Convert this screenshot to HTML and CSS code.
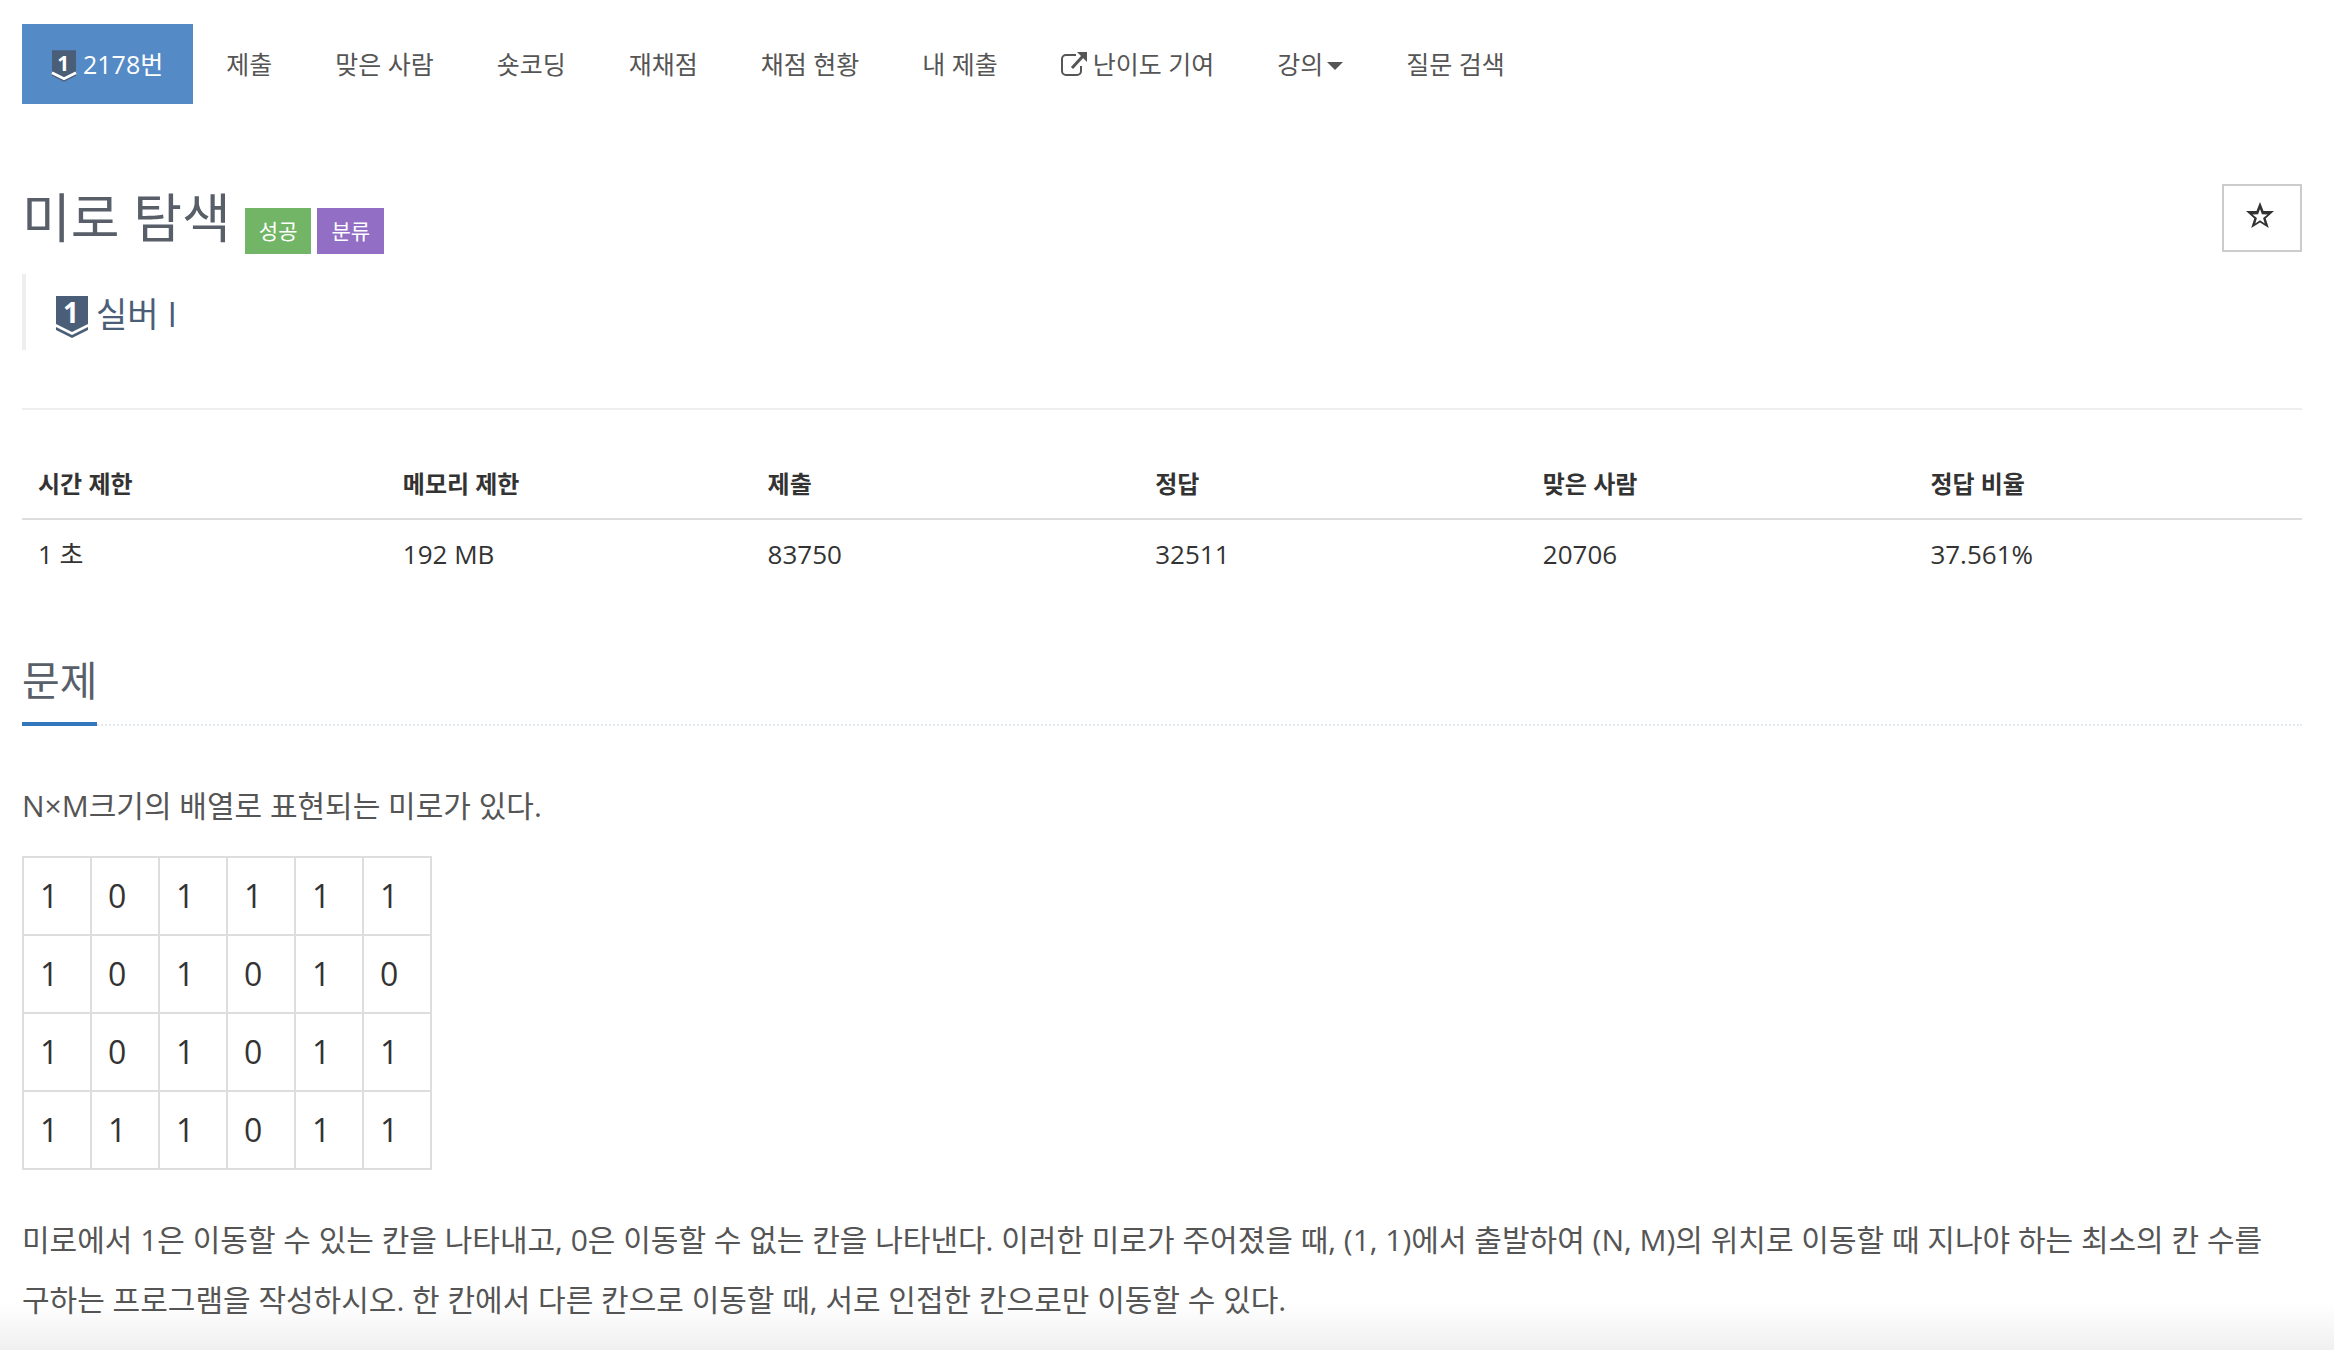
FILE: index.html
```
<!DOCTYPE html>
<html lang="ko">
<head>
    <meta charset="UTF-8">
    <meta name="viewport" content="width=device-width, initial-scale=1.0">
    <title>2178번: 미로 탐색</title>
    <link rel="stylesheet" href="styles.css">
</head>
<body>
    <div class="container">
        <nav>
            <ul class="problem-menu">
                <li class="active">
                    <a href="#">
                        <svg class="tier-small" viewBox="0 0 32 42" aria-hidden="true">
                            <path fill="#4a5e78" d="M0 0h32v34L16 42 0 34z"/>
                            <path fill="none" stroke="#fff" stroke-width="3.5" d="M0 30l16 8 16-8"/>
                            <text x="15" y="27" class="tier-number">1</text>
                        </svg>
                        <span>2178번</span>
                    </a>
                </li>
                <li><a href="#">제출</a></li>
                <li><a href="#">맞은 사람</a></li>
                <li><a href="#">숏코딩</a></li>
                <li><a href="#">재채점</a></li>
                <li><a href="#">채점 현황</a></li>
                <li><a href="#">내 제출</a></li>
                <li>
                    <a href="#">
                        <svg class="external" viewBox="0 0 26 24" aria-hidden="true">
                            <path fill="none" stroke="currentColor" stroke-width="2" d="M15 3H5a4 4 0 0 0-4 4v12a4 4 0 0 0 4 4h11a4 4 0 0 0 4-4v-5"/>
                            <path fill="none" stroke="currentColor" stroke-width="3" d="M11 16L22 4"/>
                            <path fill="currentColor" d="M16 0h10v10z"/>
                        </svg>
                        <span>난이도 기여</span>
                    </a>
                </li>
                <li><a href="#">강의<span class="caret"></span></a></li>
                <li><a href="#">질문 검색</a></li>
            </ul>
        </nav>

        <header class="page-header">
            <h1>미로 탐색</h1>
            <span class="label label-success">성공</span>
            <span class="label label-purple">분류</span>
            <button type="button" class="btn-star" aria-label="즐겨찾기">
                <svg viewBox="0 0 28 26" aria-hidden="true">
                    <path fill="currentColor" fill-rule="evenodd" d="M14 0l3.5 9H28l-8.300 7.500L22.800 26 14 20.500 5.200 26l3.100-9.500L0 9h10.500zM14 7l-1.900 5.300-5.700.2 4.500 3.500-1.600 5.500 4.700-3.200 4.700 3.200-1.600-5.500 4.500-3.500-5.700-.2z"/>
                </svg>
            </button>
        </header>

        <blockquote class="tier">
            <svg viewBox="0 0 32 42" aria-hidden="true">
                <path fill="currentColor" d="M0 0h32v28l-16 8-16-8z"/>
                <path fill="currentColor" d="M0 31l16 8 16-8v3l-16 8-16-8z"/>
                <text x="15" y="27" class="tier-number">1</text>
            </svg>
            <span>실버 I</span>
        </blockquote>

        <hr>

        <table class="problem-info">
            <thead>
                <tr>
                    <th>시간 제한</th>
                    <th>메모리 제한</th>
                    <th>제출</th>
                    <th>정답</th>
                    <th>맞은 사람</th>
                    <th>정답 비율</th>
                </tr>
            </thead>
            <tbody>
                <tr>
                    <td>1 초</td>
                    <td>192 MB</td>
                    <td>83750</td>
                    <td>32511</td>
                    <td>20706</td>
                    <td>37.561%</td>
                </tr>
            </tbody>
        </table>

        <section>
            <div class="headline">
                <h2>문제</h2>
            </div>
            <div class="problem-text">
                <p>N×M크기의 배열로 표현되는 미로가 있다.</p>
                <table class="maze">
                    <tbody>
                        <tr><td>1</td><td>0</td><td>1</td><td>1</td><td>1</td><td>1</td></tr>
                        <tr><td>1</td><td>0</td><td>1</td><td>0</td><td>1</td><td>0</td></tr>
                        <tr><td>1</td><td>0</td><td>1</td><td>0</td><td>1</td><td>1</td></tr>
                        <tr><td>1</td><td>1</td><td>1</td><td>0</td><td>1</td><td>1</td></tr>
                    </tbody>
                </table>
                <p>미로에서 1은 이동할 수 있는 칸을 나타내고, 0은 이동할 수 없는 칸을 나타낸다. 이러한 미로가 주어졌을 때, (1, 1)에서 출발하여 (N, M)의 위치로 이동할 때 지나야 하는 최소의 칸 수를 구하는 프로그램을 작성하시오. 한 칸에서 다른 칸으로 이동할 때, 서로 인접한 칸으로만 이동할 수 있다.</p>
            </div>
        </section>
    </div>
</body>
</html>
```
FILE: styles.css
```
* {
    box-sizing: border-box;
}

body {
    margin: 0;
    min-height: 100vh;
    font-family: "Open Sans", "Noto Sans CJK KR", sans-serif;
    font-size: 26px;
    line-height: 40px;
    color: #333;
    background: #fff linear-gradient(#fff, #f0f0f0) bottom / 100% 48px no-repeat;
}

h1, h2, p, blockquote {
    margin: 0;
    font-weight: 400;
}

svg {
    overflow: visible;
}

.container {
    padding: 24px 32px 0 22px;
}

/* Problem menu */
.problem-menu {
    display: flex;
    flex-wrap: wrap;
    gap: 3px;
    margin: 0;
    padding: 0;
    list-style: none;
}

.problem-menu a {
    display: flex;
    align-items: center;
    padding: 20px 30px;
    font-size: 25px;
    color: #555;
    text-decoration: none;
}

.problem-menu .active a {
    color: #fff;
    background: #548ac6;
}

.tier-small {
    width: 24px;
    height: 32px;
    margin: 4px 7px 0 0;
}

.tier-number {
    font-size: 28px;
    font-weight: 700;
    text-anchor: middle;
    fill: #fff;
}

.external {
    width: 26px;
    height: 24px;
    margin-right: 6px;
}

.caret {
    margin: 4px 0 0 4px;
    border-top: 8px solid;
    border-left: 8px solid transparent;
    border-right: 8px solid transparent;
}

/* Title */
.page-header {
    display: flex;
    align-items: flex-end;
    gap: 6px;
    height: 74px;
    margin-top: 76px;
}

.page-header h1 {
    margin-right: 8px;
    font-size: 53px;
    line-height: 72px;
    color: #585f69;
}

.label {
    padding: 8px 14px;
    font-size: 21px;
    line-height: 30px;
    color: #fff;
}

.label-success {
    background: #73b566;
}

.label-purple {
    background: #926fc5;
}

.btn-star {
    display: flex;
    align-self: flex-start;
    justify-content: center;
    width: 80px;
    height: 68px;
    margin: 4px 0 0 auto;
    padding: 16px 4px 16px 0;
    color: #333;
    background: #fff;
    border: 2px solid #ccc;
}

.btn-star svg {
    width: 28px;
    height: 26px;
}

.tier {
    display: flex;
    align-items: flex-start;
    gap: 8px;
    height: 76px;
    margin-top: 20px;
    padding: 22px 0 0 30px;
    font-size: 34px;
    line-height: 36px;
    color: #4a5e78;
    border-left: 4px solid #eee;
}

.tier svg {
    width: 32px;
    height: 42px;
}

hr {
    margin: 58px 0 40px;
    border: 0;
    border-top: 2px solid #eee;
}

/* Limits and statistics */
.problem-info {
    width: 100%;
    table-layout: fixed;
    border-collapse: collapse;
}

.problem-info th,
.problem-info td {
    width: 17%;
    padding: 14px 16px;
    text-align: left;
}

.problem-info th:nth-child(-n+2) {
    width: 16%;
}

.problem-info th {
    font-size: 24px;
    border-bottom: 2px solid #ddd;
}

/* Problem body */
.headline {
    margin-top: 60px;
    border-bottom: 2px dotted #e4e9f0;
}

.headline h2 {
    display: inline-block;
    margin-bottom: -2px;
    padding-bottom: 10px;
    font-size: 41px;
    line-height: 64px;
    color: #585f69;
    border-bottom: 4px solid #3277bc;
}

.problem-text {
    padding-top: 50px;
    word-break: keep-all;
}

.problem-text p {
    font-size: 30px;
    line-height: 60px;
    color: #555;
}

.maze {
    margin: 20px 0 40px;
    border-collapse: collapse;
}

.maze td {
    width: 68px;
    height: 78px;
    padding: 0 16px;
    font-size: 32px;
    border: 2px solid #ddd;
}
```
